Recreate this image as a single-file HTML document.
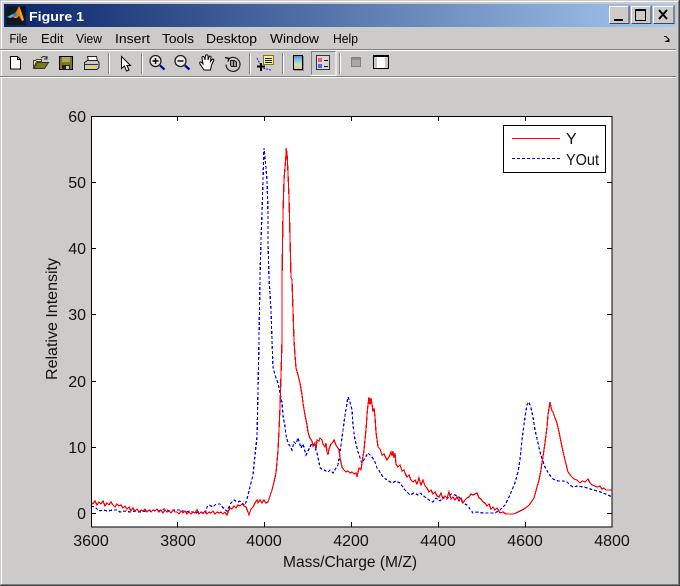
<!DOCTYPE html>
<html><head><meta charset="utf-8"><style>
html,body{margin:0;padding:0;background:#cdcbc9}
svg{display:block}
text{font-family:"Liberation Sans",Arial,sans-serif}
.m{font-size:13px;fill:#000;text-rendering:geometricPrecision}
.t{font-size:16px;fill:#111}
</style></head><body>
<svg width="680" height="586" viewBox="0 0 680 586" xmlns="http://www.w3.org/2000/svg">
<defs><linearGradient id="g" x1="0" x2="1" y1="0" y2="0"><stop offset="0" stop-color="#0a246a"/><stop offset="1" stop-color="#a6caf0"/></linearGradient>
<linearGradient id="cb" x1="0" x2="0" y1="0" y2="1"><stop offset="0" stop-color="#6a80e8"/><stop offset=".35" stop-color="#80d0e0"/><stop offset=".65" stop-color="#c8e8a8"/><stop offset="1" stop-color="#f8b0a0"/></linearGradient></defs>
<rect width="680" height="586" fill="#cdcbc9"/>
<rect x="1" y="1" width="678" height="1" fill="#fff"/>
<rect x="1" y="1" width="1" height="584" fill="#fff"/>
<rect x="679" y="0" width="1" height="586" fill="#404040"/>
<rect x="678" y="1" width="1" height="584" fill="#808080"/>
<rect x="0" y="585" width="680" height="1" fill="#404040"/>
<rect x="1" y="584" width="678" height="1" fill="#808080"/>
<rect x="4" y="4" width="672" height="23" fill="url(#g)"/>
<!-- logo -->
<rect x="6" y="6" width="20" height="19" fill="#101820"/>
<path d="M7 17l6-3 3-2 3-6 2 5 3 9-2 1-3-5-2 2-3 0-2-3z" fill="#e87a18"/>
<path d="M7 17l6-3 1 2-3 2z" fill="#50b0d8"/><path d="M13 14l3-2 1 3-3 2z" fill="#3880b0"/>
<path d="M19 6l2 5 3 9-2 1-2-7z" fill="#f8a830"/>
<text x="29" y="21" font-size="13" font-weight="bold" fill="#fff" textLength="55" lengthAdjust="spacingAndGlyphs">Figure 1</text>
<!-- window buttons -->
<g>
<rect x="609" y="6" width="20" height="18" fill="#cdcbc9"/><path d="M609.5 24V6.500h20" fill="none" stroke="#fff"/><path d="M609.500 23.500h19.500v-18" fill="none" stroke="#444"/>
<rect x="614" y="19" width="9" height="2" fill="#000"/>
<rect x="631" y="6" width="20" height="18" fill="#cdcbc9"/><path d="M631.500 24V6.500h20" fill="none" stroke="#fff"/><path d="M631.500 23.500h19.500v-18" fill="none" stroke="#444"/>
<path d="M635.500 9.500h10v11h-10z" fill="none" stroke="#000"/><rect x="635" y="9" width="11" height="2" fill="#000"/>
<rect x="653" y="6" width="21" height="18" fill="#cdcbc9"/><path d="M653.500 24V6.500h21" fill="none" stroke="#fff"/><path d="M653.500 23.500h20.500v-18" fill="none" stroke="#444"/>
<path d="M659 10l8 9M667 10l-8 9" stroke="#000" stroke-width="2"/>
</g>
<!-- menu -->
<text class="m" x="9.500" y="43" textLength="18" lengthAdjust="spacingAndGlyphs">File</text>
<text class="m" x="41" y="43" textLength="22.500" lengthAdjust="spacingAndGlyphs">Edit</text>
<text class="m" x="76" y="43" textLength="26" lengthAdjust="spacingAndGlyphs">View</text>
<text class="m" x="115" y="43" textLength="35" lengthAdjust="spacingAndGlyphs">Insert</text>
<text class="m" x="162" y="43" textLength="32" lengthAdjust="spacingAndGlyphs">Tools</text>
<text class="m" x="206" y="43" textLength="51" lengthAdjust="spacingAndGlyphs">Desktop</text>
<text class="m" x="270" y="43" textLength="49" lengthAdjust="spacingAndGlyphs">Window</text>
<text class="m" x="333" y="43" textLength="25" lengthAdjust="spacingAndGlyphs">Help</text>
<path d="M664 36.500h2l3 3v2h-3l3-2" fill="none" stroke="#000"/>
<!-- toolbar rules -->
<rect x="0" y="49" width="676" height="1" fill="#808080"/><rect x="0" y="50" width="676" height="1" fill="#fff"/>
<rect x="0" y="76" width="676" height="1" fill="#808080"/><rect x="0" y="77" width="676" height="1" fill="#fff"/>
<g fill="#808080"><rect x="108" y="53" width="1" height="21"/><rect x="141" y="53" width="1" height="21"/><rect x="249" y="53" width="1" height="21"/><rect x="282" y="53" width="1" height="21"/><rect x="339" y="53" width="1" height="21"/></g>
<g fill="#fff"><rect x="109" y="53" width="1" height="21"/><rect x="142" y="53" width="1" height="21"/><rect x="250" y="53" width="1" height="21"/><rect x="283" y="53" width="1" height="21"/><rect x="340" y="53" width="1" height="21"/></g>
<!-- new -->
<path d="M10.500 56.500h7l3 3v9.500h-10z" fill="#fff" stroke="#000"/><path d="M17.500 56.500v3h3" fill="none" stroke="#000"/>
<!-- open -->
<path d="M33.500 68.500v-8h2l1-1h5v2h-4l-1 0z" fill="#f0e880" stroke="#444"/>
<path d="M33.500 68.500l4-6h11l-4 6z" fill="#807818" stroke="#333"/>
<path d="M41 58c2-2 4-2 6 0M47 56v3h-3" fill="none" stroke="#222"/>
<!-- save -->
<rect x="59.500" y="56.500" width="13" height="13" fill="#807818" stroke="#000"/>
<rect x="62" y="57" width="8" height="5" fill="#a8a860"/><rect x="62" y="65" width="8" height="5" fill="#222"/><rect x="66" y="66" width="3" height="3" fill="#cdcbc9"/>
<!-- print -->
<path d="M87.500 56.500h9l1 5h-9z" fill="#fff" stroke="#222"/>
<path d="M84.500 62.500l3-2h10l1.500 2v5l-2 2h-12.500z" fill="#c8c8c8" stroke="#222"/>
<path d="M85 64.500h13" stroke="#333"/><rect x="88" y="66" width="7" height="2" fill="#e8d840"/>
<!-- arrow -->
<path d="M121.500 56.500v12l3-2.500 2 5 2.500-1-2-4.500h3.500z" fill="#fff" stroke="#000"/>
<!-- zoom in -->
<circle cx="155.500" cy="61" r="5.500" fill="#e8e8e8" stroke="#222" stroke-width="1.300"/>
<path d="M152.500 61h6M155.500 58v6" stroke="#000" stroke-width="1.400"/>
<path d="M160 65.500l4.500 4" stroke="#000090" stroke-width="2.200"/>
<!-- zoom out -->
<circle cx="180.500" cy="61" r="5.500" fill="#e8e8e8" stroke="#222" stroke-width="1.300"/>
<path d="M177.500 61h6" stroke="#000" stroke-width="1.400"/>
<path d="M185 65.500l4.500 4" stroke="#000090" stroke-width="2.200"/>
<!-- hand -->
<path d="M204 70l-4-6c-1-2 1-3 2-1l1 1-1-6c0-2 2-2 2.500 0l.5 2 .5-4c0-1.500 2.500-1.500 2.500 0v4l1-3c.5-1.500 2.500-1 2 .5l-.5 4 1.500-2c1-1 2.500 0 1.500 1.500l-2 4-1 5z" fill="#fff" stroke="#000"/>
<!-- rotate -->
<path d="M228 59.500a7 7 0 1 1-2 5" fill="none" stroke="#222" stroke-width="1.200"/><path d="M225 57.500l4 1-1 3" fill="none" stroke="#000" stroke-width="1.300"/>
<path d="M230.500 60.500h4l2 1.500v4.500h-5l-1-1.500z" fill="#999" stroke="#222"/><path d="M233.500 60.500v6" stroke="#222"/>
<!-- data cursor -->
<path d="M257 58l3 6 3 4 3 1 5 1" fill="none" stroke="#2020e0" stroke-dasharray="2 1"/>
<rect x="263.500" y="55.500" width="10" height="9" fill="#f8f0a0" stroke="#807818"/>
<path d="M265 58.500h7M265 60.500h7M265 62.500h7" stroke="#222"/>
<path d="M257 66.500h8" stroke="#000" stroke-width="2"/><path d="M261 63v8" stroke="#000" stroke-width="2"/>
<!-- colorbar -->
<rect x="294" y="56" width="10" height="15" fill="#909090"/>
<rect x="293.500" y="55.500" width="9" height="14" fill="url(#cb)" stroke="#000"/>
<!-- legend pressed -->
<path d="M311.500 74.500v-23h24" fill="none" stroke="#808080"/><path d="M311.500 75.500h24.500v-24" fill="none" stroke="#fff"/>
<rect x="316.500" y="55.500" width="13" height="14" fill="#d8d8d8" stroke="#333"/>
<rect x="318" y="58" width="4" height="4" fill="#f06060"/><rect x="318" y="64" width="4" height="4" fill="#6060f0"/>
<path d="M324 60.500h4M324 66.500h4" stroke="#000"/>
<!-- gray box -->
<rect x="351.500" y="57.500" width="9" height="9" fill="#a8a8a8" stroke="#808080"/><rect x="352" y="58" width="8" height="2" fill="#909090"/>
<!-- plot tools -->
<rect x="373.500" y="55.500" width="15" height="13" fill="#fff" stroke="#000"/><rect x="374" y="56" width="14" height="1" fill="#000"/><rect x="374" y="57" width="3" height="11" fill="#c8c8c8"/><rect x="385" y="57" width="3" height="11" fill="#c8c8c8"/>
<!-- plot -->
<rect x="91" y="116" width="521" height="411" fill="#fff"/>
<g fill="none" stroke-width="1.250" shape-rendering="crispEdges">
<polyline stroke="#00f" stroke-dasharray="3 2" points="91,506 95,507 99,511 103,510 108,511 113,510 117,510 120,512 125,511 130,512 135,511 140,512 146,511 152,510 158,511 164,509 170,511 176,510 180,510 186,512 190,511 195,513 200,512 205,514 207,507 209,505 213,507 216,504 220,504 224,509 227,511 231,503 234,500 238,502 240,501 243,504 245,505 247,499 250,487 253,475 255,455 257,437 258,390 259,340 260,277 261,240 262,213 263,180 264,148 265,157 267,180 268,213 268,243 269,278 271,310 272,340 273,367 275,375 278,383 280,393 282,403 283,415 285,427 286,435 288,443 290,446 292,450 294,442 296,444 298,438 301,448 303,444 306,455 309,449 312,443 315,447 317,453 319,462 320,468 324,470 328,472 330,470 333,473 336,468 338,465 340,452 343,430 345,415 348,397 350,402 352,410 353,425 355,440 358,452 362,463 365,458 368,453 372,457 375,462 377,468 380,472 383,477 387,480 392,483 396,481 400,483 405,490 410,495 414,493 418,495 420,493 425,497 429,500 433,502 436,498 440,501 443,497 447,499 451,494 455,495 459,497 463,503 467,505 470,509 473,513 477,512 483,513 489,513 495,513 500,510 505,505 509,497 512,490 515,483 518,472 520,460 522,440 525,417 527,405 529,402 531,408 533,417 535,430 538,443 541,456 545,467 549,474 553,479 558,481 563,481 567,482 570,485 573,487 578,486 583,487 588,488 593,490 598,491 603,493 608,495 612,497"/>
<polyline stroke="#f00" points="91,502 93,504 95,501 97,505 99,502 101,504 103,501 105,506 107,503 109,505 111,502 113,505 115,507 117,504 119,506 121,505 123,508 125,506 127,509 129,507 131,511 133,508 135,511 137,509 139,512 141,510 143,511 145,509 147,512 149,510 151,512 153,510 155,511 157,509 159,512 161,510 163,513 165,510 167,512 169,511 171,513 173,510 175,512 177,512 179,514 181,511 183,513 185,511 187,514 189,512 191,514 193,512 195,513 197,510 199,514 201,512 203,513 205,511 207,514 209,512 211,513 213,511 215,514 217,512 219,513 221,512 223,514 225,512 227,515 229,510 230,508 232,509 234,506 236,508 238,505 240,506 242,504 244,506 246,507 248,512 249,515 250,512 251,509 253,507 255,503 257,500 258,503 260,500 262,503 264,500 266,503 268,502 270,496 272,490 274,482 276,473 277,462 278,450 279,430 280,407 281,375 282,340 282,280 283,213 284,180 286,155 286,148 287,153 288,173 289,197 290,237 291,277 292,280 293,310 294,340 295,355 296,368 298,375 300,383 302,395 303,403 305,415 307,425 308,432 310,438 312,441 313,446 315,443 316,449 317,440 319,441 320,438 322,440 323,444 325,447 326,443 327,452 328,455 329,449 331,444 333,442 334,440 336,445 338,448 339,450 340,458 342,467 344,470 346,472 348,471 350,473 352,472 354,474 356,473 357,477 359,468 361,470 362,463 364,450 366,430 367,415 368,405 369,397 370,405 371,398 372,404 373,412 374,408 375,417 376,432 378,447 380,449 382,455 384,454 387,460 389,457 391,452 392,456 393,451 394,458 395,453 396,464 398,467 400,465 402,471 404,470 405,473 407,477 409,475 411,480 413,482 415,480 417,484 419,478 421,485 423,480 425,486 427,488 429,492 431,490 433,494 435,492 437,496 439,497 441,493 443,499 445,496 447,498 449,492 451,499 453,497 455,500 457,497 459,501 461,498 463,503 465,500 467,498 469,497 471,494 473,495 477,493 479,498 481,499 483,502 485,503 487,506 489,504 491,509 493,507 495,510 497,508 500,513 503,512 506,514 510,514 513,514 516,513 520,511 524,509 527,507 530,504 534,498 537,487 539,480 541,470 542,463 544,450 546,435 547,427 548,415 550,402 551,407 552,411 553,412 555,418 557,423 559,432 562,447 565,460 568,472 571,476 574,479 577,480 580,483 582,481 585,482 588,479 590,483 592,485 595,486 597,487 600,486 602,489 604,488 606,490 608,490 612,490"/>
</g>
<!-- axes -->
<g fill="none" stroke="#000" shape-rendering="crispEdges">
<rect x="91.500" y="116.500" width="520.500" height="410.500"/>
<path d="M177.500 527v-5M264.500 527v-5M351.500 527v-5M438.500 527v-5M525.500 527v-5M177.500 116v5M264.500 116v5M351.500 116v5M438.500 116v5M525.500 116v5M91 513.500h5M91 447.500h5M91 381.500h5M91 314.500h5M91 248.500h5M91 182.500h5M612 513.500h-5M612 447.500h-5M612 381.500h-5M612 314.500h-5M612 248.500h-5M612 182.500h-5"/>
</g>
<!-- tick labels -->
<g text-anchor="end">
<text class="t" x="86" y="122">60</text><text class="t" x="86" y="188">50</text><text class="t" x="86" y="254">40</text><text class="t" x="86" y="320">30</text><text class="t" x="86" y="387">20</text><text class="t" x="86" y="453">10</text><text class="t" x="86" y="519">0</text>
</g>
<g text-anchor="middle">
<text class="t" x="91" y="546">3600</text><text class="t" x="178" y="546">3800</text><text class="t" x="264" y="546">4000</text><text class="t" x="351" y="546">4200</text><text class="t" x="438" y="546">4400</text><text class="t" x="525" y="546">4600</text><text class="t" x="612" y="546">4800</text>
<text class="t" x="350" y="567" textLength="134" lengthAdjust="spacingAndGlyphs">Mass/Charge (M/Z)</text>
<text class="t" transform="translate(57 319) rotate(-90)" textLength="122" lengthAdjust="spacingAndGlyphs">Relative Intensity</text>
</g>
<!-- legend -->
<rect x="503.500" y="125.500" width="102" height="47" fill="#fff" stroke="#000" shape-rendering="crispEdges"/>
<path d="M512 138.500h48" stroke="#f00" shape-rendering="crispEdges" fill="none"/>
<path d="M512 158.500h48" stroke="#00f" stroke-dasharray="3 2" shape-rendering="crispEdges" fill="none"/>
<text class="t" x="566" y="144">Y</text>
<text class="t" x="566" y="165" textLength="33" lengthAdjust="spacingAndGlyphs">YOut</text>
</svg>
</body></html>
